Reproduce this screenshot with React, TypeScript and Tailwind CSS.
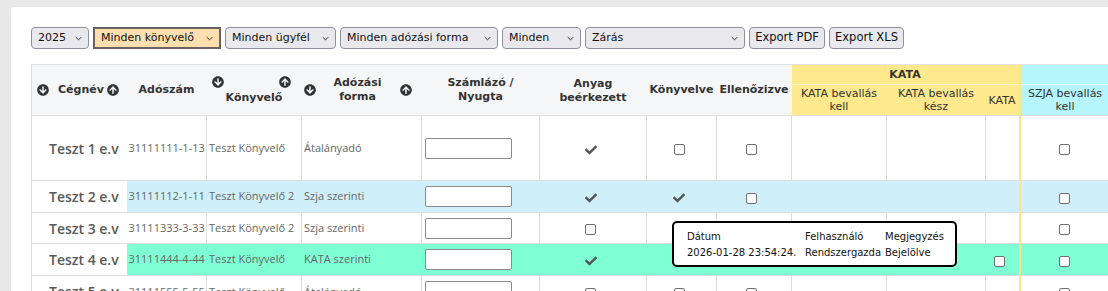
import React from "react";

const dv = "font-['DejaVu_Sans',Verdana,sans-serif]";
const os = "font-['Open_Sans',sans-serif]";

function CircleDown() {
  return (
    <svg viewBox="0 0 512 512" className="w-[12px] h-[12px] shrink-0 fill-[#333]">
      <path d="M504 256c0 137-111 248-248 248S8 393 8 256 119 8 256 8s248 111 248 248zm-143.6-28.9L288 302.6V120c0-13.3-10.7-24-24-24h-16c-13.3 0-24 10.7-24 24v182.6l-72.4-75.5c-9.3-9.7-24.8-9.9-34.3-.4l-10.9 11c-9.4 9.4-9.4 24.6 0 33.9L239 404.3c9.4 9.4 24.6 9.4 33.9 0l132.7-132.7c9.4-9.4 9.4-24.6 0-33.9l-10.9-11c-9.5-9.5-25-9.3-34.3.4z" />
    </svg>
  );
}

function CircleUp() {
  return (
    <svg viewBox="0 0 512 512" className="w-[12px] h-[12px] shrink-0 fill-[#333]">
      <path d="M8 256C8 119 119 8 256 8s248 111 248 248-111 248-248 248S8 393 8 256zm143.6 28.9l72.4-75.5V392c0 13.3 10.7 24 24 24h16c13.3 0 24-10.7 24-24V209.4l72.4 75.5c9.3 9.7 24.8 9.9 34.3.4l10.9-11c9.4-9.4 9.4-24.6 0-33.9L273 107.7c-9.4-9.4-24.6-9.4-33.9 0L106.3 240.4c-9.4 9.4-9.4 24.6 0 33.9l10.9 11c9.6 9.5 25.1 9.3 34.4-.4z" />
    </svg>
  );
}

function Check() {
  return (
    <svg viewBox="0 0 512 512" className="inline-block w-[12px] h-[12px] fill-[#555]">
      <path d="M173.898 439.404l-166.4-166.4c-9.997-9.997-9.997-26.206 0-36.204l36.203-36.204c9.997-9.998 26.207-9.998 36.204 0L192 312.69 432.095 72.596c9.997-9.997 26.207-9.997 36.204 0l36.203 36.204c9.997 9.997 9.997 26.206 0 36.204l-294.4 294.401c-9.998 9.997-26.207 9.997-36.204-.001z" />
    </svg>
  );
}

function Box() {
  return <span className="inline-block w-[11px] h-[11px] border border-[#6f6f6f] rounded-[2px] bg-white align-middle" />;
}

function Chevron() {
  return (
    <svg viewBox="0 0 10 6" className="w-[7px] h-[5px] shrink-0">
      <path d="M1 1l4 4 4-4" fill="none" stroke="#333" strokeWidth="1.4" />
    </svg>
  );
}

function Select({ label, w, active = false }: { label: string; w: string; active?: boolean }) {
  return (
    <div
      className={`${w} h-[22px] flex items-center justify-between pl-[6px] pr-[6px] text-[11px] text-[#111] ${
        active
          ? "bg-[#fddfb0] border-2 border-[#6a6262]"
          : "bg-[#e9e9ed] border border-[#8f8f9d] rounded-[4px]"
      }`}
    >
      <span>{label}</span>
      <Chevron />
    </div>
  );
}

function Btn({ label, w }: { label: string; w: string }) {
  return (
    <div className={`${w} h-[22px] flex items-center justify-center bg-[#e9e9ed] border border-[#8f8f9d] rounded-[4px] text-[11.5px] text-[#111]`}>
      {label}
    </div>
  );
}

type Mark = "check" | "box" | "";

interface Row {
  name: string;
  tax: string;
  acc: string;
  form: string;
  anyag: Mark;
  konyv: Mark;
  ell: Mark;
  kata: Mark;
  szja: Mark;
  bg: string;
  h: string;
}

const rows: Row[] = [
  { name: "Teszt 1 e.v", tax: "31111111-1-13", acc: "Teszt Könyvelő", form: "Átalányadó", anyag: "check", konyv: "box", ell: "box", kata: "", szja: "box", bg: "", h: "h-[65px]" },
  { name: "Teszt 2 e.v", tax: "31111112-1-11", acc: "Teszt Könyvelő 2", form: "Szja szerinti", anyag: "check", konyv: "check", ell: "box", kata: "", szja: "box", bg: "bg-[#cff0fb]", h: "h-[32px]" },
  { name: "Teszt 3 e.v", tax: "31111333-3-33", acc: "Teszt Könyvelő 2", form: "Szja szerinti", anyag: "box", konyv: "box", ell: "box", kata: "", szja: "box", bg: "", h: "h-[31px]" },
  { name: "Teszt 4 e.v", tax: "31111444-4-44", acc: "Teszt Könyvelő", form: "KATA szerinti", anyag: "check", konyv: "box", ell: "box", kata: "box", szja: "box", bg: "bg-[#7fffd4]", h: "h-[32px]" },
  { name: "Teszt 5 e.v", tax: "31111555-5-55", acc: "Teszt Könyvelő", form: "Átalányadó", anyag: "box", konyv: "box", ell: "box", kata: "", szja: "box", bg: "", h: "h-[32px]" },
];

function M({ m }: { m: Mark }) {
  if (m === "check") return <Check />;
  if (m === "box") return <Box />;
  return null;
}

export default function App() {
  return (
    <div className="w-[1108px] h-[291px] overflow-hidden bg-[#e8e8e8] pl-[11px] pt-[7px]">
      <div className={`relative bg-white w-[1200px] h-[400px] rounded-[3px] pl-[20px] pt-[20px] ${dv}`}>
        {/* Toolbar */}
        <div className="flex gap-[4px]">
          <Select label="2025" w="w-[58px]" />
          <Select label="Minden könyvelő" w="w-[128px]" active />
          <Select label="Minden ügyfél" w="w-[111px]" />
          <Select label="Minden adózási forma" w="w-[158px]" />
          <Select label="Minden" w="w-[79px]" />
          <Select label="Zárás" w="w-[160px]" />
          <Btn label="Export PDF" w="w-[76px]" />
          <Btn label="Export XLS" w="w-[75px]" />
        </div>

        {/* Table */}
        <table className="mt-[15px] table-fixed border-collapse w-[1178px] border-l border-[#dddddd]">
          <colgroup>
            <col className="w-[95px]" />
            <col className="w-[80px]" />
            <col className="w-[95px]" />
            <col className="w-[120px]" />
            <col className="w-[118px]" />
            <col className="w-[107px]" />
            <col className="w-[70px]" />
            <col className="w-[75px]" />
            <col className="w-[95px]" />
            <col className="w-[99px]" />
            <col className="w-[34px]" />
            <col className="w-[90px]" />
            <col className="w-[100px]" />
          </colgroup>
          <thead className="text-[11px] text-[#333] leading-[14px]">
            <tr className="h-[20px] border-t border-[#e2e2e2]">
              <th rowSpan={2} className="bg-[#f5f6f8] p-0">
                <div className="flex items-center pl-[5px]">
                  <CircleDown />
                  <span className="ml-[9px]">Cégnév</span>
                  <span className="ml-[3px]"><CircleUp /></span>
                </div>
              </th>
              <th rowSpan={2} className="bg-[#f5f6f8] p-0">Adószám</th>
              <th rowSpan={2} className="bg-[#f5f6f8] p-0">
                <div className="flex justify-between pl-[5px] pr-[11px]">
                  <CircleDown />
                  <CircleUp />
                </div>
                <div className="mt-[3px] text-center">Könyvelő</div>
              </th>
              <th rowSpan={2} className="bg-[#f5f6f8] p-0">
                <div className="flex items-center justify-between pl-[2px] pr-[10px]">
                  <CircleDown />
                  <span className="text-center">Adózási<br />forma</span>
                  <CircleUp />
                </div>
              </th>
              <th rowSpan={2} className="bg-[#f5f6f8] p-0 text-center">Számlázó /<br />Nyugta</th>
              <th rowSpan={2} className="bg-[#f5f6f8] p-0 text-center pt-[2px]">Anyag<br />beérkezett</th>
              <th rowSpan={2} className="bg-[#f5f6f8] p-0 text-center">Könyvelve</th>
              <th rowSpan={2} className="bg-[#f5f6f8] p-0 text-center">Ellenőzizve</th>
              <th colSpan={3} className="bg-[#fee98d] p-0 text-center border-b border-[#fff6c9]">KATA</th>
              <th className="bg-[#b5f6fc] p-0 border-l-2 border-[#fde68a] border-b border-b-[#dffcff]"></th>
              <th className="bg-[#b5f6fc] p-0"></th>
            </tr>
            <tr className="h-[31px] font-normal">
              <th className="bg-[#fee98d] p-0 font-normal text-center leading-[13px]">KATA bevallás<br />kell</th>
              <th className="bg-[#fee98d] p-0 font-normal text-center leading-[13px]">KATA bevallás<br />kész</th>
              <th className="bg-[#fee98d] p-0 font-normal text-center leading-[13px]">KATA</th>
              <th className="bg-[#b5f6fc] p-0 font-normal text-center leading-[13px] border-l-2 border-[#fde68a]">SZJA bevallás<br />kell</th>
              <th className="bg-[#b5f6fc] p-0"></th>
            </tr>
          </thead>
          <tbody className={os}>
            {rows.map((r) => {
              const c = r.bg ? `${r.bg} border-x border-transparent` : "border-x border-[#dddddd]";
              return (
                <tr key={r.name} className={`${r.h} border-t border-[#dddddd]`}>
                  <td className="bg-white pl-[17px] text-[14px] font-semibold text-[#5a5a5a] whitespace-nowrap">{r.name}</td>
                  <td className={`${r.bg} pl-[2px] text-[11px] text-[#666] whitespace-nowrap`}>{r.tax}</td>
                  <td className={`${c} pl-[2px] text-[11px] text-[#666] whitespace-nowrap`}>{r.acc}</td>
                  <td className={`${c} pl-[2px] text-[11px] text-[#666] whitespace-nowrap`}>{r.form}</td>
                  <td className={`${c} pl-[3px]`}>
                    <div className="w-[87px] h-[21px] bg-white border border-[#8a8a8a] rounded-[2px]" />
                  </td>
                  <td className={`${c} text-center pr-[5px]`}><M m={r.anyag} /></td>
                  <td className={`${c} text-center pr-[5px]`}><M m={r.konyv} /></td>
                  <td className={`${c} text-center pr-[6px]`}><M m={r.ell} /></td>
                  <td className={c}></td>
                  <td className={c}></td>
                  <td className={`${c} text-center pr-[5px]`}><M m={r.kata} /></td>
                  <td className={`${r.bg} border-l-2 border-[#fde68a] text-center pr-[2px]`}><M m={r.szja} /></td>
                  <td className={r.bg}></td>
                </tr>
              );
            })}
          </tbody>
        </table>

        {/* Tooltip */}
        <div className="absolute left-[661px] top-[214px] w-[285px] h-[46px] bg-white border-2 border-black rounded-[5px] pl-[13px] pt-[6px] text-[10px] leading-[16px] text-[#111]">
          <div className="grid grid-cols-[118px_80px_auto]">
            <span>Dátum</span>
            <span>Felhasználó</span>
            <span>Megjegyzés</span>
            <span>2026-01-28 23:54:24.</span>
            <span>Rendszergazda</span>
            <span>Bejelölve</span>
          </div>
        </div>
      </div>
    </div>
  );
}
